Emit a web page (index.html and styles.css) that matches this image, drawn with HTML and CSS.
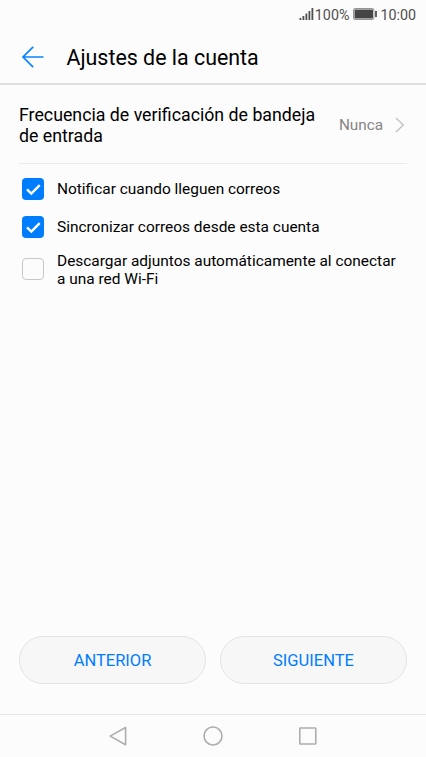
FILE: index.html
```html
<!DOCTYPE html>
<html lang="es">
<head>
    <meta charset="UTF-8">
    <meta name="viewport" content="width=device-width, initial-scale=1.0">
    <title>Ajustes de la cuenta</title>
    <link rel="stylesheet" href="styles.css">
</head>
<body>
    <div class="status-bar">
        <svg class="signal" width="15" height="14" viewBox="0 0 15 14">
            <path d="M1.4 11v2M4.4 9v4M7.4 6.5v6.5M10.4 4v9M13.4 1v12" fill="none" stroke="#505050" stroke-width="1.8"/>
        </svg>
        <span class="percent">100%</span>
        <svg class="battery" width="25" height="12" viewBox="0 0 25 12">
            <rect x="0.5" y="0.5" width="20.5" height="11" rx="1.5" fill="none" stroke="#959595"/>
            <rect x="1.5" y="1.5" width="18.5" height="9" fill="#454545"/>
            <rect x="22" y="3" width="2" height="6" fill="#606060"/>
        </svg>
        <span>10:00</span>
    </div>

    <header>
        <svg width="22" height="22" viewBox="0 0 22 22">
            <path d="M11.2 0.8L1 11l10.2 10.2M1 11h20.5" fill="none" stroke="#0a84ff" stroke-width="1.7"/>
        </svg>
        <h1>Ajustes de la cuenta</h1>
    </header>

    <main>
        <div class="frequency">
            <p>Frecuencia de verificación de bandeja de entrada</p>
            <span>Nunca</span>
            <svg width="10" height="16" viewBox="0 0 10 16">
                <path d="M1 1l7.2 7L1 15" fill="none" stroke="#c4c4c4" stroke-width="1.5"/>
            </svg>
        </div>

        <label class="option">
            <input type="checkbox" checked>
            <span class="box"><svg width="22" height="22" viewBox="0 0 22 22"><path d="M5 11.3l4.3 4.2 8.4-8.4" fill="none" stroke="#fff" stroke-width="2.4"/></svg></span>
            <span class="text">Notificar cuando lleguen correos</span>
        </label>
        <label class="option">
            <input type="checkbox" checked>
            <span class="box"><svg width="22" height="22" viewBox="0 0 22 22"><path d="M5 11.3l4.3 4.2 8.4-8.4" fill="none" stroke="#fff" stroke-width="2.4"/></svg></span>
            <span class="text">Sincronizar correos desde esta cuenta</span>
        </label>
        <label class="option tall">
            <input type="checkbox">
            <span class="box"></span>
            <span class="text">Descargar adjuntos automáticamente al conectar a una red Wi-Fi</span>
        </label>
    </main>

    <div class="buttons">
        <button type="button">ANTERIOR</button>
        <button type="button">SIGUIENTE</button>
    </div>

    <nav>
        <svg width="20" height="22" viewBox="0 0 20 22">
            <path d="M17.6 2.5v17.2L2.2 11.1z" fill="none" stroke="#adadad" stroke-width="1.6" stroke-linejoin="round"/>
        </svg>
        <svg width="20" height="22" viewBox="0 0 20 22">
            <circle cx="10" cy="11" r="9" fill="none" stroke="#adadad" stroke-width="1.6"/>
        </svg>
        <svg width="20" height="22" viewBox="0 0 20 22">
            <rect x="1.8" y="3" width="16" height="16" rx="0.5" fill="none" stroke="#adadad" stroke-width="1.6"/>
        </svg>
    </nav>
</body>
</html>
```

FILE: styles.css
```css
* {
    box-sizing: border-box;
}

body {
    margin: 0;
    height: 757px;
    display: flex;
    flex-direction: column;
    background-color: #fcfcfc;
    color: #000;
    font-family: Roboto, sans-serif;
}

svg {
    display: block;
    flex: none;
}

.status-bar {
    display: flex;
    align-items: center;
    justify-content: flex-end;
    height: 28px;
    padding-right: 10px;
    font-size: 14.3px;
    color: #505050;
}

.signal {
    margin-right: 1px;
}

.battery {
    margin: 0 2px 0 4px;
}

.status-bar span {
    margin-top: 1px;
}

header {
    display: flex;
    align-items: center;
    height: 57px;
    padding: 2px 0 0 22px;
    border-bottom: 2px solid #dedede;
}

h1 {
    margin: 2px 0 0 22.5px;
    font-size: 21.4px;
    font-weight: 400;
}

main {
    flex: 1;
    padding: 0 19px;
}

.frequency {
    display: flex;
    align-items: center;
    height: 79px;
    padding: 1px 2px 0 0;
    border-bottom: 1px solid #ebebeb;
}

.frequency p {
    flex: 1;
    margin: 2px 0 0;
    padding-right: 16px;
    font-size: 17.75px;
    line-height: 21px;
}

.frequency span {
    margin: 1px 12px 0 0;
    font-size: 15.3px;
    color: #858585;
}

.option {
    display: flex;
    align-items: center;
    height: 38px;
    padding-left: 3px;
    font-size: 15.45px;
    line-height: 18px;
}

.option:first-of-type {
    margin-top: 6px;
}

.option.tall {
    height: 46px;
}

.tall .text {
    margin-top: 2px;
    padding-right: 8px;
}

.option input {
    display: none;
}

.box {
    flex: none;
    width: 22px;
    height: 22px;
    margin-right: 13px;
    border: 1px solid #c8c8c8;
    border-radius: 4px;
}

input:checked + .box {
    border: none;
    background-color: #007dff;
}

.buttons {
    display: flex;
    gap: 14px;
    padding: 0 19px 30px;
}

button {
    flex: 1;
    height: 48px;
    border: 1px solid #e4e4e4;
    border-radius: 24px;
    background-color: #f7f7f7;
    color: #007dff;
    font-family: inherit;
    font-size: 16.5px;
}

nav {
    display: flex;
    align-items: center;
    justify-content: center;
    gap: 75px;
    height: 43px;
    border-top: 1px solid #e4e4e4;
}
```
